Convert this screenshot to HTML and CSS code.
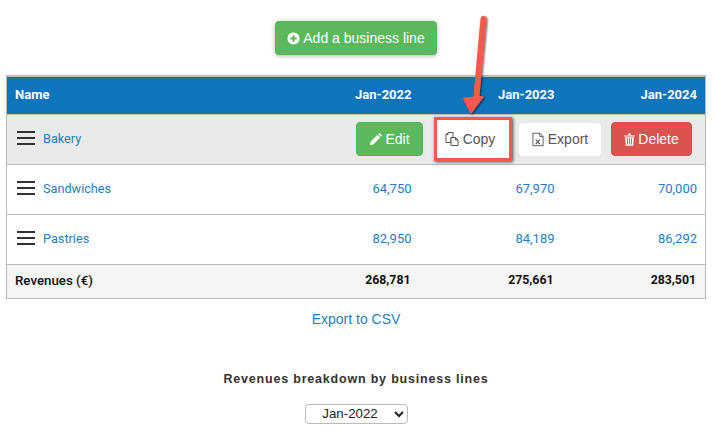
FILE: index.html
```html
<!DOCTYPE html>
<html lang="en">
<head>
<meta charset="utf-8">
<title>Business lines</title>
<link rel="stylesheet" href="styles.css">
</head>
<body>
<div class="top"><button class="btn btn-green btn-add"><svg class="ic" viewBox="0 0 14 14" width="13" height="13"><circle cx="7" cy="7" r="6.500" fill="#fff"/><path d="M7 3.400v7.200M3.400 7h7.200" stroke="#5cb85c" stroke-width="2.200"/></svg>Add a business line</button></div>
<table class="grid">
<colgroup><col><col class="c"><col class="c"><col class="c"></colgroup>
<thead><tr><th class="name">Name</th><th>Jan-2022</th><th>Jan-2023</th><th>Jan-2024</th></tr></thead>
<tbody>
<tr class="sel">
<td class="name"><div class="line"><span class="burger"><i></i><i></i><i></i></span><a>Bakery</a></div></td>
<td colspan="3" class="acts"><div class="actions">
<button class="btn btn-green btn-edit"><svg class="ic" viewBox="0 0 14 14" width="13" height="13"><path d="M1 13l.7-3.600 7.400-7.400 2.900 2.900-7.400 7.400zM10 1.100l.7-.6a1 1 0 0 1 1.300 0l1.500 1.500a1 1 0 0 1 0 1.300l-.6.7z" fill="#fff"/></svg>Edit</button>
<button class="btn btn-white btn-copy"><svg class="ic" viewBox="0 0 14 14" width="14" height="14" fill="#fff" stroke="#444" stroke-width=".9"><path d="M1 2.500l2-2h5v5H6v5H1z"/><path d="M3 .5v2H1" fill="none"/><path d="M6 5.500h4.500l2.500 2.500v5.500H6z"/><path d="M10.500 5.500V8H13" fill="none"/></svg>Copy</button>
<button class="btn btn-white btn-export"><svg class="ic" viewBox="0 0 13 15" width="12" height="15" fill="none" stroke="#444" stroke-width=".9"><path d="M1 .7h7.500l3.500 3.500v10H1zM8.500 .7v3.500H12"/><path d="M4 7.500l4.500 5M8.500 7.500l-4.500 5" stroke-width="1.100"/></svg>Export</button>
<button class="btn btn-red btn-del"><svg class="ic" viewBox="0 0 12 14" width="11" height="13"><path d="M0 2.500h12v1.200H0zM4 2.500l.7-2h2.600l.7 2H7l-.4-1H5.400L5 2.500zM1.300 4.500h9.400l-.6 9.300H1.900zM3.300 5.500v7h1v-7zm2.200 0v7h1v-7zm2.200 0v7h1v-7z" fill="#fff" fill-rule="evenodd"/></svg>Delete</button>
</div></td>
</tr>
<tr>
<td class="name"><div class="line"><span class="burger"><i></i><i></i><i></i></span><a>Sandwiches</a></div></td>
<td class="num">64,750</td><td class="num">67,970</td><td class="num">70,000</td>
</tr>
<tr>
<td class="name"><div class="line"><span class="burger"><i></i><i></i><i></i></span><a>Pastries</a></div></td>
<td class="num">82,950</td><td class="num">84,189</td><td class="num">86,292</td>
</tr>
</tbody>
<tfoot><tr><td class="name">Revenues (€)</td><td>268,781</td><td>275,661</td><td>283,501</td></tr></tfoot>
</table>
<div class="csv"><a>Export to CSV</a></div>
<h4 class="title">Revenues breakdown by business lines</h4>
<div class="pick"><select class="sel-month"><option>Jan-2022</option><option>Jan-2023</option><option>Jan-2024</option></select></div>
<svg class="arrow" viewBox="0 0 60 110" width="60" height="110"><defs><filter id="s" x="-30%" y="-30%" width="160%" height="160%"><feDropShadow dx="1" dy="1" stdDeviation="1" flood-color="#000" flood-opacity=".7"/></filter></defs><g filter="url(#s)"><path d="M25.500 6L18 88" stroke="#f9584d" stroke-width="6" stroke-linecap="round" fill="none"/><path d="M6 85.500L24.500 84L13 99.500z" fill="#f9584d" stroke="#f9584d" stroke-width="2" stroke-linejoin="round"/></g></svg>
</body>
</html>
```
FILE: styles.css
```css
* { box-sizing: border-box; }
html, body { margin: 0; padding: 0; }
body { width: 715px; height: 435px; overflow: hidden; position: relative; background: #fff; font-family: "Liberation Sans", Arial, sans-serif; font-size: 14px; color: #333; }
.top { display: flex; justify-content: center; width: 712px; padding: 21px 0 20px; }
.btn { display: inline-flex; align-items: center; justify-content: center; gap: 3px; height: 34px; border: 1px solid transparent; border-radius: 4px; font: 14px/20px "Liberation Sans", Arial, sans-serif; padding: 0; }
.ic { flex: none; }
.btn-green { background: #5cb85c; border-color: #55b255; color: #fff; }
.btn-red { background: #d9534f; border-color: #d64f4a; color: #fff; }
.btn-white { background: #fff; color: #555; }
.btn-add { width: 162px; box-shadow: 0 1px 4px rgba(0,0,0,.3); }
.btn-edit { width: 67px; }
.btn-copy { width: 78px; height: 44px; margin-left: 11px; padding-right: 6px; border: 3px solid #f9584d; border-radius: 0; box-shadow: 1px 1px 3px rgba(0,0,0,.7); gap: 4px; }
.btn-export { width: 82px; height: 33px; margin-left: 7px; gap: 4px; }
.btn-del { width: 81px; margin-left: 10px; }
.grid { width: 700px; margin-left: 6px; border-collapse: collapse; table-layout: fixed; font-family: Roboto, Arial, sans-serif; font-size: 12.700px; }
.c { width: 143px; }
.grid th { height: 38px; padding: 0 8px 2px 9px; background: #0e74bc; color: #fff; text-align: right; font-size: 13px; font-weight: 700; border-top: 2px solid #bbb; border-bottom: 1px solid #bbb; }
.grid th:first-child { border-left: 1px solid #bbb; }
.grid th:last-child { border-right: 1px solid #bbb; }
.grid th.name { text-align: left; padding-left: 8px; }
.grid td { height: 50px; padding: 0 8px 2px; border-bottom: 1px solid #bbb; text-align: right; }
.grid td:first-child { border-left: 1px solid #bbb; }
.grid td:last-child { border-right: 1px solid #bbb; }
.grid td.name { text-align: left; padding-left: 10px; }
.sel td { background: #eaeaea; }
.num { color: #1b80c4; font-size: 13px; }
.line { display: flex; align-items: center; gap: 8px; }
.line a { color: #1b80c4; }
.burger { display: flex; flex-direction: column; gap: 4px; width: 18px; }
.burger i { display: block; height: 2px; background: #333; }
.grid td.acts { padding: 0 13px 0 0; }
.actions { display: flex; justify-content: flex-end; align-items: center; }
.grid tfoot td { height: 34px; background: #f5f5f5; color: #111; font-size: 12.300px; font-weight: 700; padding-right: 9px; }
.grid tfoot td.name { padding-left: 8px; font-size: 13.300px; font-weight: 500; }
.csv { width: 712px; text-align: center; padding-top: 11px; }
.csv a { color: #1b80c4; line-height: 18px; }
.title { width: 712px; margin: 43px 0 0; text-align: center; font-size: 12.500px; font-weight: 700; letter-spacing: .8px; line-height: 16px; color: #333; }
.pick { display: flex; justify-content: center; width: 712px; padding-top: 17px; }
.sel-month { width: 103px; height: 20px; font: 13.300px "Liberation Sans", Arial, sans-serif; text-align: center; color: #222; background: #fff; border: 1px solid #bbb; border-radius: 4px; }
.arrow { position: absolute; left: 458px; top: 13px; }
```
